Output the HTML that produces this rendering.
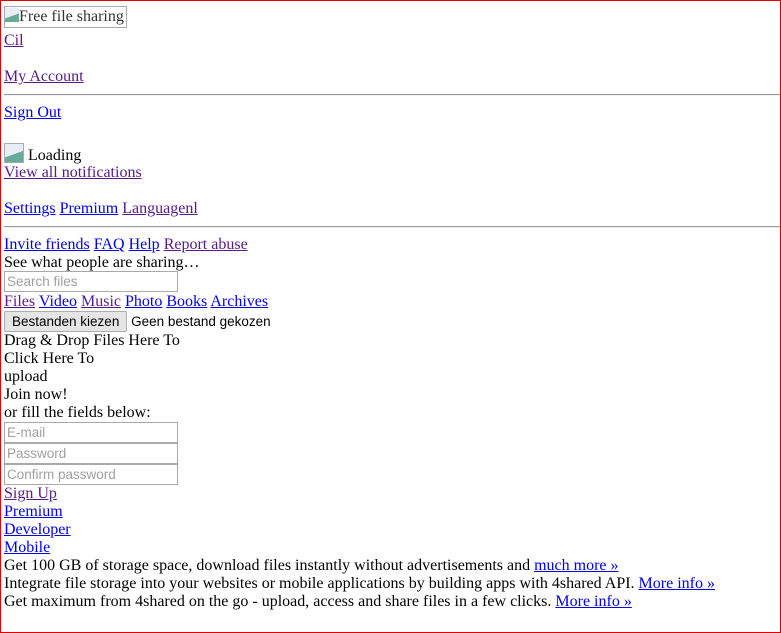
<!DOCTYPE html>
<html><head><meta charset="utf-8"><style>
html,body{margin:0;padding:0;}
body{width:781px;height:633px;box-sizing:border-box;border:1px solid #e00000;position:relative;overflow:hidden;font-family:"Liberation Serif",serif;font-size:16px;color:#000;background:#fff}
.l{position:absolute;left:3px;line-height:18px;white-space:nowrap}
a{color:#0000ee;text-decoration:underline}
a.v{color:#551a8b}
.hr{position:absolute;left:3px;right:0;height:0;border-top:1px solid #9a9a9a;border-bottom:1px solid #eee}
.inp{position:absolute;left:3px;width:170px;height:19px;border:1px solid #a9a9a9;font-family:"Liberation Sans",sans-serif;font-size:13.5px;color:#a0a0a0;line-height:19px;padding-left:2px;box-sizing:content-box}
.img{display:inline-block;width:18px;height:18px;border:1px solid #aaa;vertical-align:-3px;background:linear-gradient(160deg,#e8eef8 55%,#6a9 55%)}
</style></head><body>
<div class="l" style="top:5px;"><span style="display:inline-block;border:1px solid #aaa;height:20px;line-height:20px;padding-right:2px;color:#333"><span class="img" style="border:none;width:14px;height:14px;vertical-align:-1px"></span>Free file sharing</span></div>
<div class="l" style="top:31px"><a class="v">Cil</a></div>
<div class="l" style="top:67px"><a class="v">My Account</a></div>
<div class="hr" style="top:93px"></div>
<div class="l" style="top:103px"><a>Sign Out</a></div>
<div class="l" style="top:142px"><span class="img"></span> Loading</div>
<div class="l" style="top:163px"><a class="v">View all notifications</a></div>
<div class="l" style="top:199px"><a>Settings</a> <a>Premium</a> <a class="v">Languagenl</a></div>
<div class="hr" style="top:225px"></div>
<div class="l" style="top:235px"><a>Invite friends</a> <a>FAQ</a> <a>Help</a> <a class="v">Report abuse</a></div>
<div class="l" style="top:253px">See what people are sharing…</div>
<div class="inp" style="top:270px">Search files</div>
<div class="l" style="top:292px"><a class="v">Files</a> <a>Video</a> <a class="v">Music</a> <a>Photo</a> <a>Books</a> <a>Archives</a></div>
<div class="l" style="top:310px;font-family:'Liberation Sans',sans-serif;font-size:13.5px;line-height:19px"><span style="display:inline-block;border:1px solid #adadad;background:#e5e5e5;padding:0 7px;border-radius:2px">Bestanden kiezen</span> Geen bestand gekozen</div>
<div class="l" style="top:331px">Drag &amp; Drop Files Here To</div>
<div class="l" style="top:349px">Click Here To</div>
<div class="l" style="top:367px">upload</div>
<div class="l" style="top:385px">Join now!</div>
<div class="l" style="top:403px">or fill the fields below:</div>
<div class="inp" style="top:421px">E-mail</div>
<div class="inp" style="top:442px">Password</div>
<div class="inp" style="top:463px">Confirm password</div>
<div class="l" style="top:484px"><a class="v">Sign Up</a></div>
<div class="l" style="top:502px"><a>Premium</a></div>
<div class="l" style="top:520px"><a>Developer</a></div>
<div class="l" style="top:538px"><a>Mobile</a></div>
<div class="l" style="top:556px">Get 100 GB of storage space, download files instantly without advertisements and <a>much more »</a></div>
<div class="l" style="top:574px">Integrate file storage into your websites or mobile applications by building apps with 4shared API. <a>More info »</a></div>
<div class="l" style="top:592px">Get maximum from 4shared on the go - upload, access and share files in a few clicks. <a>More info »</a></div>
</body></html>
